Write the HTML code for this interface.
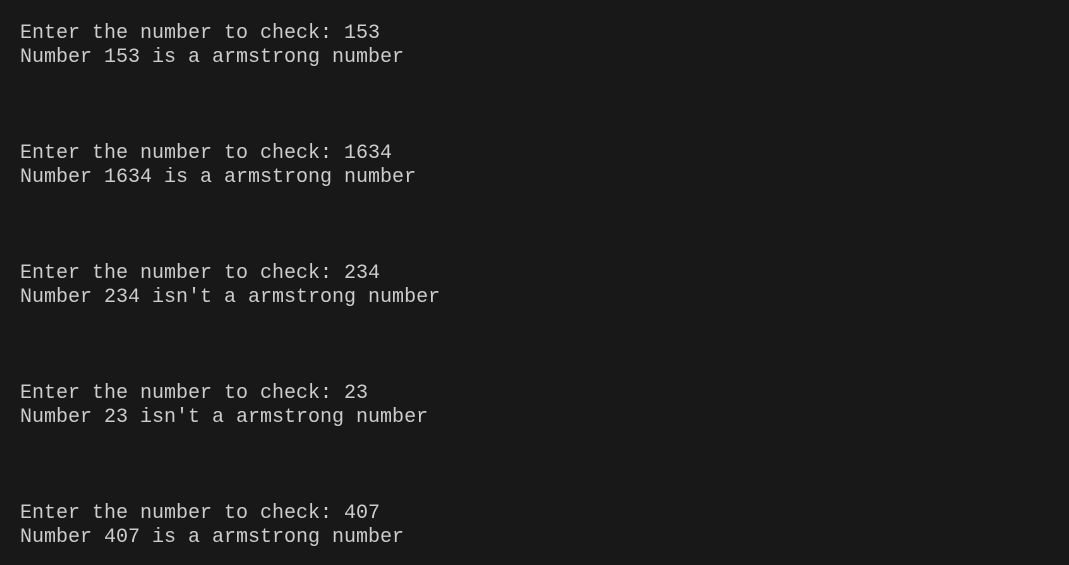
<!DOCTYPE html>
<html><head><style>
html,body{margin:0;padding:0;background:#181818;width:1069px;height:565px;overflow:hidden}
pre{margin:0;position:absolute;left:20px;top:22px;font-family:"Liberation Mono",monospace;font-size:20px;line-height:24px;color:#cccccc}
</style></head><body>
<pre>Enter the number to check: 153
Number 153 is a armstrong number



Enter the number to check: 1634
Number 1634 is a armstrong number



Enter the number to check: 234
Number 234 isn't a armstrong number



Enter the number to check: 23
Number 23 isn't a armstrong number



Enter the number to check: 407
Number 407 is a armstrong number</pre>
</body></html>
